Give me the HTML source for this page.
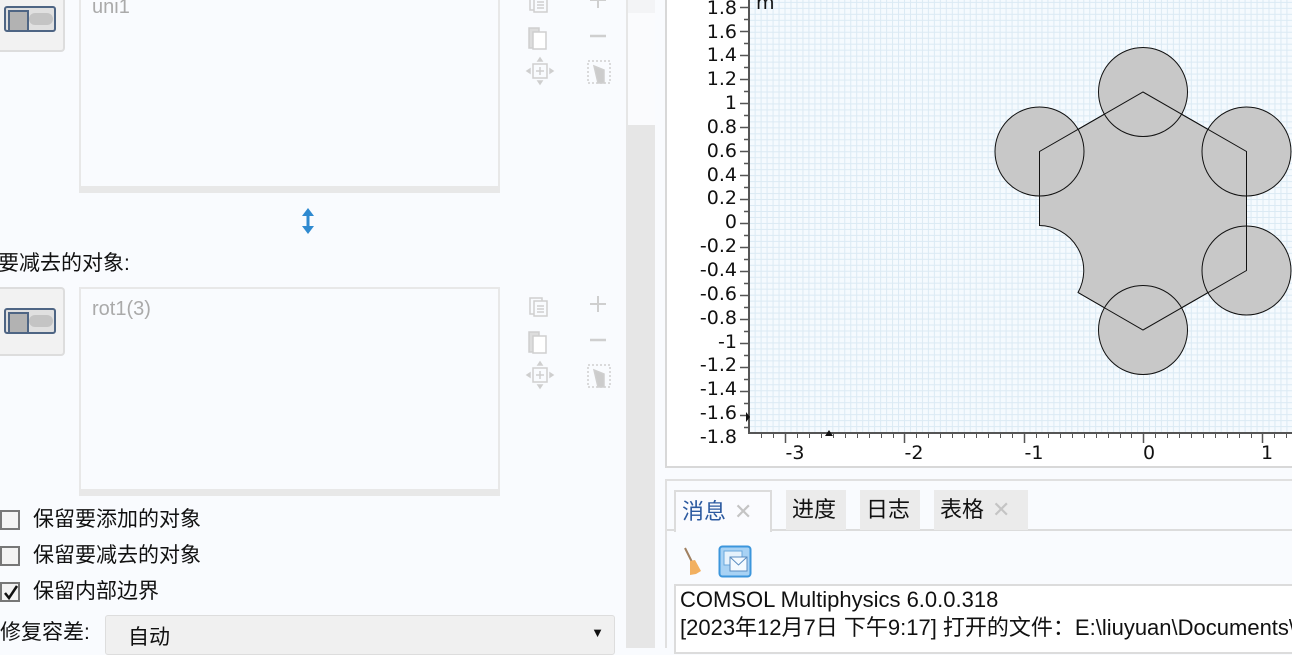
<!DOCTYPE html>
<html><head><meta charset="utf-8"><style>
*{margin:0;padding:0;box-sizing:border-box}
body{width:1292px;height:648px;overflow:hidden;background:#f9fbfe;position:relative;font-family:"Liberation Sans","Noto Sans CJK SC",sans-serif;color:#111}
.abs{position:absolute}
.btn{position:absolute;left:-6px;width:71px;background:#f2f2f2;border:2px solid #ddd;border-left:none;border-radius:0 4px 4px 0}
.tog{position:absolute;left:4px;width:52px;height:26px;border:2px solid #4e6584;border-radius:3px;background:#e0e0e0}
.tog:before{content:"";position:absolute;left:2px;top:2px;width:17px;height:18px;background:#b2b2b2;border:2px solid #4e6584}
.tog:after{content:"";position:absolute;left:23px;top:5px;width:24px;height:12px;background:#c4c4c4;border-radius:6px}
.box{position:absolute;left:79px;width:421px;background:#f9fbfe;border:2px solid #e8e8e8;border-bottom:7px solid #e8e8e8}
.ph{position:absolute;left:11px;font-size:20px;color:#aaa}
.lbl{position:absolute;font-size:21px;line-height:24px;white-space:nowrap}
.cb{position:absolute;left:0;width:20px;height:20px;border:2px solid #777;background:#f3f3f3}
.tab{position:absolute;top:490px;height:40px;background:#ebebeb;font-size:22px;line-height:40px;padding-left:6px;white-space:nowrap}
.x{color:#c4c4c4;margin-left:8px;font-size:22px}
</style></head><body>

<div class="btn" style="top:-14px;height:66px"><div class="tog" style="top:18px;left:10px"></div></div>
<div class="box" style="top:-10px;height:203px"><div class="ph" style="top:4px">uni1</div></div>
<div class="btn" style="top:287px;height:69px"><div class="tog" style="top:19px;left:10px"></div></div>
<div class="box" style="top:287px;height:209px"><div class="ph" style="top:9px">rot1(3)</div></div>

<svg class="abs" style="left:300px;top:206px" width="16" height="30"><path d="M8 4V26" stroke="#2f8ad0" stroke-width="3"/><path d="M2 10L8 2L14 10Z M2 20L8 28L14 20Z" fill="#2f8ad0"/></svg>
<div class="lbl" style="left:-2px;top:252px">要减去的对象:</div>

<svg class="abs" style="left:524px;top:0" width="90" height="400" fill="none" stroke="#cfcfcf" stroke-width="1.5">
 <g id="ic"><rect x="6" y="-6" width="12" height="16"/><rect x="10" y="-3" width="13" height="15" fill="#f9fbfe"/><path d="M13 2h7M13 5h7M13 8h7"/>
 <rect x="5" y="28" width="10" height="20" fill="#ddd"/><rect x="9" y="32" width="13" height="17" fill="#fff"/>
 <rect x="9" y="64" width="14" height="14"/><path d="M16 67v8M12 71h8"/><path d="M16 58l-2 3h4zM16 84l-2-3h4zM3 71l3-2v4zM29 71l-3-2v4z" fill="#ccc"/>
 <path d="M74 -8v16M66 0h16" stroke-width="2"/><path d="M66 36h16" stroke-width="2.5"/>
 <rect x="64" y="61" width="22" height="22" stroke-dasharray="2 2"/><path d="M70 66l10 4v13h-6z" fill="#ccc"/></g>
 <use href="#ic" y="304"/>
</svg>

<div class="abs" style="left:626px;top:0;width:29px;height:648px;background:#e6e6e6"></div>
<div class="abs" style="left:628px;top:13px;width:27px;height:112px;background:#fafbfd"></div>
<div class="abs" style="left:628px;top:0;width:27px;height:13px;background:#f3f4f6"></div>
<div class="abs" style="left:655px;top:0;width:10px;height:648px;background:#f9fbfe"></div>

<div class="cb" style="top:510px"></div><div class="lbl" style="left:33px;top:508px">保留要添加的对象</div>
<div class="cb" style="top:546px"></div><div class="lbl" style="left:33px;top:544px">保留要减去的对象</div>
<div class="cb" style="top:582px"><svg width="18" height="18" style="position:absolute;left:0;top:0"><path d="M3 9l4 5 8-12" stroke="#111" stroke-width="2.5" fill="none"/></svg></div><div class="lbl" style="left:33px;top:580px">保留内部边界</div>
<div class="lbl" style="left:0;top:621px">修复容差:</div>
<div class="abs" style="left:105px;top:615px;width:510px;height:40px;background:#f0f0f0;border:1px solid #ddd;border-radius:3px"><span style="position:absolute;left:22px;top:5px;font-size:21px">自动</span><span style="position:absolute;right:10px;top:9px;font-size:13px">▼</span></div>

<div class="abs" style="left:665px;top:0;width:627px;height:468px;background:#fff;border-left:2px solid #d8d8d8;border-bottom:2px solid #d8d8d8"></div>
<svg class="abs" style="left:0;top:0" width="1292" height="470" font-family="DejaVu Sans, sans-serif" font-size="19">
<defs>
<pattern id="g" patternUnits="userSpaceOnUse" x="1143" y="211" width="11.95" height="11.95">
<rect width="11.95" height="11.95" fill="#f5fafe"/>
<path d="M0.5 0V11.95M6.5 0V11.95M0 0.5H11.95M0 6.5H11.95" stroke="#dbeaf4" stroke-width="1"/>
</pattern>
<clipPath id="c"><rect x="750" y="0" width="542" height="432"/></clipPath>
</defs>
<rect x="750" y="0" width="542" height="432" fill="url(#g)"/>
<g clip-path="url(#c)" stroke="#111" stroke-width="1">
<path d="M1143 92 L1246.5 151.5 L1246.5 270.5 L1143 330 L1078 292.5 A45 45 0 0 0 1039.5 225.5 L1039.5 151.5 Z" fill="#c8c8c8"/>
<g fill="#c8c8c8"><circle cx="1143" cy="92" r="44.5"/><circle cx="1246.5" cy="151.5" r="44.5"/><circle cx="1246.5" cy="270.5" r="44.5"/><circle cx="1143" cy="330" r="44.5"/><circle cx="1039.5" cy="151.5" r="44.5"/></g>
<path d="M1078 292.5 L1143 330 L1246.5 270.5 L1246.5 151.5 L1143 92 L1039.5 151.5 L1039.5 225.5" fill="none"/>
</g>
<path d="M749 0V433H1292" stroke="#555" stroke-width="2" fill="none"/>
<path d="M740 7.5h9M744 19.5h5M740 31.5h9M744 43.5h5M740 55.5h9M744 67.5h5M740 79.5h9M744 91.5h5M740 103.5h9M744 115.5h5M740 127.5h9M744 139.5h5M740 151.5h9M744 163.5h5M740 175.5h9M744 187.5h5M740 199.5h9M744 211.5h5M740 223.5h9M744 235.5h5M740 247.5h9M744 259.5h5M740 271.5h9M744 283.5h5M740 295.5h9M744 307.5h5M740 319.5h9M744 331.5h5M740 343.5h9M744 355.5h5M740 367.5h9M744 379.5h5M740 391.5h9M744 403.5h5M740 415.5h9M744 427.5h5" stroke="#555" stroke-width="1.5"/>
<path d="M785.5 433v10M904.5 433v10M1024.5 433v10M1143.5 433v10M1262.5 433v10" stroke="#555" stroke-width="1.5"/>
<path d="M761.5 433v5M773.5 433v5M797.5 433v5M809.5 433v5M821.5 433v5M833.5 433v5M845.5 433v5M857.5 433v5M869.5 433v5M881.5 433v5M893.5 433v5M916.5 433v5M928.5 433v5M940.5 433v5M952.5 433v5M964.5 433v5M976.5 433v5M988.5 433v5M1000.5 433v5M1012.5 433v5M1036.5 433v5M1048.5 433v5M1060.5 433v5M1072.5 433v5M1084.5 433v5M1096.5 433v5M1108.5 433v5M1120.5 433v5M1131.5 433v5M1155.5 433v5M1167.5 433v5M1179.5 433v5M1191.5 433v5M1203.5 433v5M1215.5 433v5M1227.5 433v5M1239.5 433v5M1251.5 433v5M1274.5 433v5M1286.5 433v5" stroke="#555" stroke-width="1"/>
<path d="M825 436l4-6 4 6zM746 412l4 5-4 5z" fill="#111"/>
<g text-anchor="end" fill="#111">
<text x="737" y="14">1.8</text><text x="737" y="38">1.6</text><text x="737" y="61">1.4</text><text x="737" y="85">1.2</text><text x="737" y="109">1</text><text x="737" y="133">0.8</text><text x="737" y="157">0.6</text><text x="737" y="181">0.4</text><text x="737" y="204">0.2</text><text x="737" y="228">0</text><text x="737" y="252">-0.2</text><text x="737" y="276">-0.4</text><text x="737" y="300">-0.6</text><text x="737" y="324">-0.8</text><text x="737" y="348">-1</text><text x="737" y="371">-1.2</text><text x="737" y="395">-1.4</text><text x="737" y="419">-1.6</text><text x="737" y="443">-1.8</text>
</g>
<text x="756" y="9" fill="#111">m</text>
<g text-anchor="middle" fill="#111"><text x="795" y="459">-3</text><text x="914" y="459">-2</text><text x="1034" y="459">-1</text><text x="1149" y="459">0</text><text x="1267" y="459">1</text></g>
</svg>

<div class="abs" style="left:665px;top:479px;width:627px;height:2px;background:#e0e0e0"></div>
<div class="abs" style="left:665px;top:529px;width:627px;height:2px;background:#dcdcdc"></div>
<div class="abs" style="left:665px;top:479px;width:2px;height:169px;background:#e0e0e0"></div>
<div class="tab" style="left:674px;width:98px;height:42px;background:#fafbfe;border:2px solid #dcdcdc;border-bottom:none;color:#2c5aa0">消息<span class="x">✕</span></div>
<div class="tab" style="left:786px;width:60px">进度</div>
<div class="tab" style="left:860px;width:60px">日志</div>
<div class="tab" style="left:934px;width:94px">表格<span class="x">✕</span></div>
<svg class="abs" style="left:680px;top:544px" width="80" height="36">
<path d="M5 4L12 18" stroke="#a08060" stroke-width="2"/><path d="M10 17l5-1 6 11-5 3-6 1z" fill="#f2b060"/>
<rect x="39.5" y="2.5" width="31" height="30" rx="3" fill="#a8d2f4" stroke="#3c96dc" stroke-width="2"/>
<rect x="44" y="7" width="18" height="14" fill="#e6f2fc" stroke="#6aa8dc"/><rect x="50" y="13" width="17" height="14" fill="#f4faff" stroke="#5a8cc0"/><path d="M50 13l8.5 8 8.5-8" stroke="#5a8cc0" fill="none"/>
</svg>
<div class="abs" style="left:674px;top:584px;width:630px;height:70px;background:#fff;border:2px solid #dcdcdc"></div>
<div class="abs" style="left:680px;top:586px;font-size:22px;line-height:28px;white-space:nowrap">COMSOL Multiphysics 6.0.0.318<br>[2023年12月7日 下午9:17] 打开的文件：E:\liuyuan\Documents\</div>
</body></html>
